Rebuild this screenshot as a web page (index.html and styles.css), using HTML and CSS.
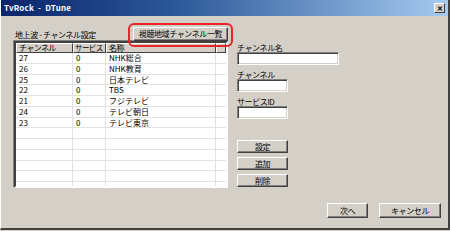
FILE: index.html
```html
<!DOCTYPE html>
<html lang="ja">
<head>
<meta charset="utf-8">
<title>TvRock - DTune</title>
<link rel="stylesheet" href="styles.css">
</head>
<body>
<div class="window">
  <div class="titlebar">
    <span class="title">TvRock&nbsp; - &nbsp;DTune</span>
    <span class="close">✕</span>
  </div>
  <div class="content">
    <div class="main">
      <div class="left">
        <div class="toprow">
          <span class="label">地上波 - チャンネル設定</span>
          <button class="btn btn-area">視聴地域チャンネル一覧</button>
        </div>
        <div class="list">
          <div class="row head">
            <div class="c c1">チャンネル</div><div class="c c2">サービス</div><div class="c c3">名称</div><div class="c c4"></div>
          </div>
          <div class="row"><div class="c c1">27</div><div class="c c2">0</div><div class="c c3">NHK総合</div><div class="c c4"></div></div>
          <div class="row"><div class="c c1">26</div><div class="c c2">0</div><div class="c c3">NHK教育</div><div class="c c4"></div></div>
          <div class="row"><div class="c c1">25</div><div class="c c2">0</div><div class="c c3">日本テレビ</div><div class="c c4"></div></div>
          <div class="row"><div class="c c1">22</div><div class="c c2">0</div><div class="c c3">TBS</div><div class="c c4"></div></div>
          <div class="row"><div class="c c1">21</div><div class="c c2">0</div><div class="c c3">フジテレビ</div><div class="c c4"></div></div>
          <div class="row"><div class="c c1">24</div><div class="c c2">0</div><div class="c c3">テレビ朝日</div><div class="c c4"></div></div>
          <div class="row"><div class="c c1">23</div><div class="c c2">0</div><div class="c c3">テレビ東京</div><div class="c c4"></div></div>
          <div class="row"><div class="c c1"></div><div class="c c2"></div><div class="c c3"></div><div class="c c4"></div></div>
          <div class="row"><div class="c c1"></div><div class="c c2"></div><div class="c c3"></div><div class="c c4"></div></div>
          <div class="row"><div class="c c1"></div><div class="c c2"></div><div class="c c3"></div><div class="c c4"></div></div>
          <div class="row"><div class="c c1"></div><div class="c c2"></div><div class="c c3"></div><div class="c c4"></div></div>
          <div class="row"><div class="c c1"></div><div class="c c2"></div><div class="c c3"></div><div class="c c4"></div></div>
          <div class="row"><div class="c c1"></div><div class="c c2"></div><div class="c c3"></div><div class="c c4"></div></div>
          <div class="row"><div class="c c1"></div><div class="c c2"></div><div class="c c3"></div><div class="c c4"></div></div>
        </div>
      </div>
      <div class="right">
        <div class="field">
          <span class="label">チャンネル名</span>
          <div class="input input-wide"></div>
        </div>
        <div class="field">
          <span class="label">チャンネル</span>
          <div class="input"></div>
        </div>
        <div class="field">
          <span class="label">サービスID</span>
          <div class="input"></div>
        </div>
        <div class="actions">
          <button class="btn btn-side">設定</button>
          <button class="btn btn-side">追加</button>
          <button class="btn btn-side">削除</button>
        </div>
      </div>
    </div>
    <div class="footer">
      <button class="btn btn-next">次へ</button>
      <button class="btn btn-cancel">キャンセル</button>
    </div>
  </div>
</div>
</body>
</html>
```
FILE: styles.css
```css
* { box-sizing: border-box; }
html, body { margin: 0; padding: 0; }
body {
  width: 450px;
  height: 231px;
  overflow: hidden;
  background: #d4d0c8;
  font-family: "Noto Sans CJK JP", "Noto Sans", sans-serif;
  font-size: 8px;
  color: #000;
}
.window {
  width: 450px;
  height: 230px;
  background: #d4d0c8;
  border-left: 1px solid #ffffff;
  border-right: 2px solid #404040;
  border-bottom: 2px solid #404040;
  display: flex;
  flex-direction: column;
}
.titlebar {
  height: 16px;
  background: linear-gradient(to right, #0a246a 0%, #2d5a9a 40%, #a6caf0 100%);
  display: flex;
  align-items: center;
  justify-content: space-between;
  padding: 0 3px 0 3px;
}
.title {
  color: #fff;
  font-weight: bold;
  font-size: 8px;
  line-height: 16px;
  letter-spacing: 0.2px;
}
.close {
  width: 11px;
  height: 10px;
  background: #d4d0c8;
  border: 1px solid;
  border-color: #fff #404040 #404040 #fff;
  font-size: 7px;
  line-height: 8px;
  text-align: center;
  font-weight: bold;
  color: #000;
}
.content {
  flex: 1;
  display: flex;
  flex-direction: column;
  padding: 11px 6px 0 13px;
}
.main {
  display: flex;
  gap: 9px;
}
.left {
  width: 214px;
  display: flex;
  flex-direction: column;
}
.toprow {
  height: 14px;
  display: flex;
  justify-content: space-between;
  align-items: center;
}
.label {
  font-size: 8px;
  line-height: 9px;
  padding-left: 1px;
  letter-spacing: -0.4px;
}
.btn {
  font-family: inherit;
  font-size: 8px;
  letter-spacing: -0.4px;
  background: #d4d0c8;
  color: #000;
  border: 1px solid;
  border-color: #fff #404040 #404040 #fff;
  box-shadow: inset -1px -1px 0 #808080;
  padding: 0;
  margin: 0;
  line-height: 1;
}
.btn-area {
  position: relative;
  width: 95px;
  height: 14px;
}
.btn-area::after {
  content: "";
  position: absolute;
  left: -6px;
  top: -5px;
  right: -6px;
  bottom: -7px;
  border: 2px solid #e8262a;
  border-radius: 6px;
}
.list {
  height: 147px;
  background: #fff;
  border: 2px solid;
  border-color: #404040 #fff #fff #404040;
  box-shadow: 1px 1px 0 #d4d0c8, -1px -1px 0 #808080;
  overflow: hidden;
}
.row {
  display: flex;
  height: 10.75px;
  border-bottom: 1px solid #e2e2e2;
}
.row.head {
  height: 10px;
  border-bottom: none;
  background: #d4d0c8;
}
.c {
  line-height: 10px;
  padding-left: 3px;
  border-right: 1px solid #e2e2e2;
  white-space: nowrap;
  overflow: hidden;
}
.row.head .c {
  border-top: 1px solid #fff;
  border-left: 1px solid #fff;
  border-right: 1px solid #404040;
  border-bottom: 1px solid #404040;
  line-height: 8px;
  padding-left: 2px;
  letter-spacing: -0.6px;
}
.row.head .c2 { padding-left: 1px; font-size: 7.5px; }
.c1 { width: 57px; }
.c2 { width: 33px; }
.c3 { width: 110px; }
.c4 { flex: 1; border-right: none; }
.right {
  display: flex;
  flex-direction: column;
  padding-top: 16px;
}
.field {
  display: flex;
  flex-direction: column;
  margin-bottom: 5px;
}
.field .label {
  padding-left: 0;
  height: 9px;
}
.input {
  width: 51px;
  height: 13px;
  background: #fff;
  border: 1px solid;
  border-color: #808080 #fff #fff #808080;
  box-shadow: inset 1px 1px 0 #404040, inset -1px -1px 0 #d4d0c8;
}
.input-wide { width: 102px; }
.actions {
  display: flex;
  flex-direction: column;
  gap: 4px;
  margin-top: 16px;
}
.btn-side {
  width: 51px;
  height: 13px;
}
.footer {
  display: flex;
  justify-content: flex-end;
  gap: 11px;
  margin-top: 15px;
  padding-right: 1px;
}
.btn-next { width: 41px; height: 15px; }
.btn-cancel { width: 62px; height: 15px; }
```
